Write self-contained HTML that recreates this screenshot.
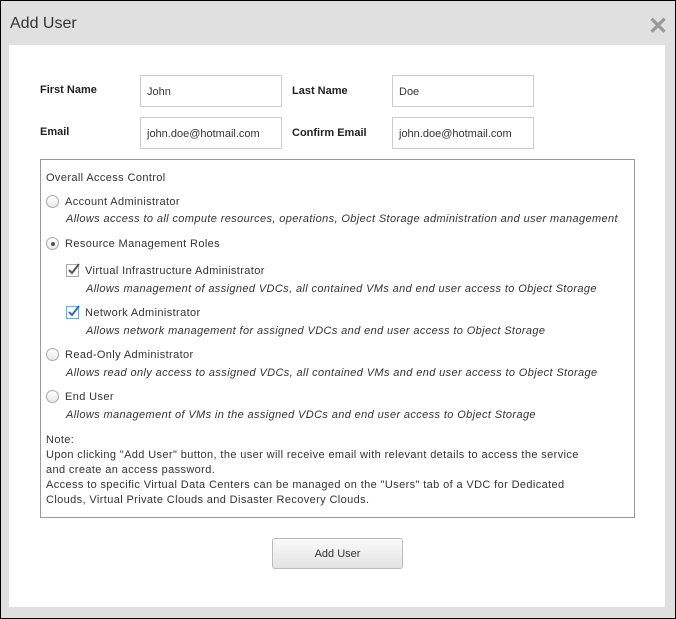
<!DOCTYPE html>
<html><head><style>
*{margin:0;padding:0;box-sizing:border-box}
body{width:676px;height:619px;background:#e0e0e0;position:relative;font-family:"Liberation Sans",sans-serif;color:#333;overflow:hidden}
.frame{position:absolute;left:0;top:0;width:676px;height:619px;box-shadow:inset 0 0 0 1px #000;pointer-events:none;z-index:5}
.a{position:absolute;white-space:nowrap}
.title{left:10px;top:15px;font-size:16px;color:#333}
.x{left:648px;top:12px;font-size:24px;color:#999;font-weight:bold}
.panel{left:9px;top:45px;width:656px;height:562px;background:#fff}
.lbl{font-size:11px;font-weight:bold;color:#222;margin-top:1px}
.in{width:142px;height:32px;border:1px solid #ccc;font-size:11px;padding:1px 6px 0;line-height:31px;color:#333}
.box{left:40px;top:159px;width:595px;height:359px;border:1px solid #999}
.t{font-size:11px;color:#333;letter-spacing:0.38px;margin-top:1px}
.i{font-size:11px;font-style:italic;color:#333;letter-spacing:0.38px;margin-top:1px}
.rad{width:13px;height:13px;border:1px solid #aaa;border-radius:50%;background:linear-gradient(#fff,#e8e8e8)}
.btn{left:272px;top:538px;width:131px;height:31px;border:1px solid #bbb;border-radius:3px;background:linear-gradient(#fafafa,#e4e4e4);font-size:11px;text-align:center;line-height:31px;color:#333}
</style></head><body>
<div class="frame"></div>
<div class="a title">Add User</div>
<div class="a x">✕</div>
<div class="a panel"></div>
<div class="a lbl" style="left:40px;top:83px">First Name</div>
<div class="a in" style="left:140px;top:75px">John</div>
<div class="a lbl" style="left:292px;top:84px">Last Name</div>
<div class="a in" style="left:392px;top:75px">Doe</div>
<div class="a lbl" style="left:40px;top:125px">Email</div>
<div class="a in" style="left:140px;top:117px">john.doe@hotmail.com</div>
<div class="a lbl" style="left:292px;top:126px">Confirm Email</div>
<div class="a in" style="left:392px;top:117px">john.doe@hotmail.com</div>
<div class="a box"></div>
<div class="a t" style="left:46px;top:171px">Overall Access Control</div>
<div class="a rad" style="left:46px;top:195px"></div>
<div class="a t" style="left:65px;top:195px">Account Administrator</div>
<div class="a i" style="left:66px;top:212px">Allows access to all compute resources, operations, Object Storage administration and user management</div>
<div class="a rad" style="left:46px;top:237px"></div>
<div style="position:absolute;left:51px;top:242px;width:4px;height:4px;border-radius:50%;background:#555"></div>
<div class="a t" style="left:65px;top:237px">Resource Management Roles</div>
<svg class="a" style="left:66px;top:262px" width="15" height="15"><rect x="0.5" y="2.5" width="12" height="12" fill="#fff" stroke="#aaa"/><path d="M3 8 L6 11 L13 2" fill="none" stroke="#555" stroke-width="2"/></svg>
<div class="a t" style="left:85px;top:264px">Virtual Infrastructure Administrator</div>
<div class="a i" style="left:86px;top:282px">Allows management of assigned VDCs, all contained VMs and end user access to Object Storage</div>
<svg class="a" style="left:66px;top:304px" width="15" height="15"><rect x="0.5" y="2.5" width="12" height="12" fill="#fff" stroke="#7aa7d6"/><path d="M3 8 L6 11 L13 2" fill="none" stroke="#2a6ebb" stroke-width="2"/></svg>
<div class="a t" style="left:85px;top:306px">Network Administrator</div>
<div class="a i" style="left:86px;top:324px">Allows network management for assigned VDCs and end user access to Object Storage</div>
<div class="a rad" style="left:46px;top:348px"></div>
<div class="a t" style="left:65px;top:348px">Read-Only Administrator</div>
<div class="a i" style="left:66px;top:366px">Allows read only access to assigned VDCs, all contained VMs and end user access to Object Storage</div>
<div class="a rad" style="left:46px;top:390px"></div>
<div class="a t" style="left:65px;top:390px">End User</div>
<div class="a i" style="left:66px;top:408px">Allows management of VMs in the assigned VDCs and end user access to Object Storage</div>
<div class="a t" style="left:46px;top:432px;line-height:15px">Note:<br>Upon clicking "Add User" button, the user will receive email with relevant details to access the service<br>and create an access password.<br>Access to specific Virtual Data Centers can be managed on the "Users" tab of a VDC for Dedicated<br>Clouds, Virtual Private Clouds and Disaster Recovery Clouds.</div>
<div class="a btn">Add User</div>
</body></html>
